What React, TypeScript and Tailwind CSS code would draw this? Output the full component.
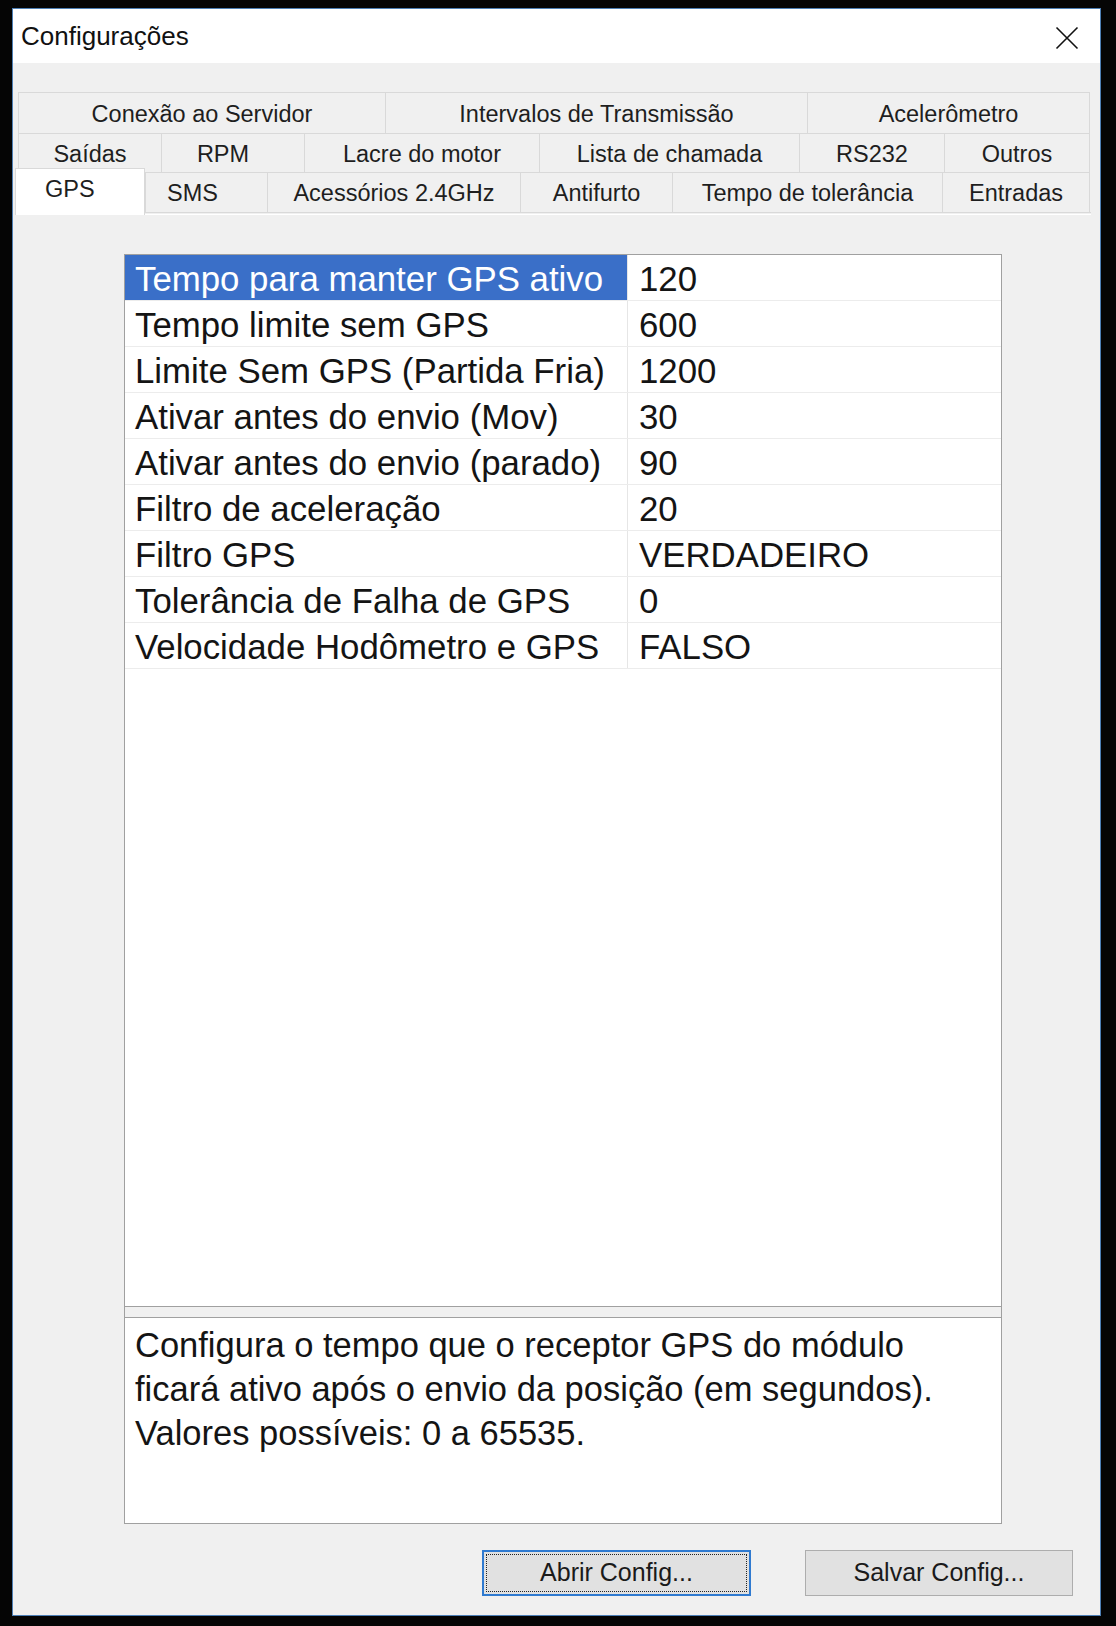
import React from "react";

const font = { fontFamily: '"Liberation Sans", Arial, sans-serif' };

type Tab = { label: string; w: number; extra?: string };

const row1: Tab[] = [
  { label: "Conexão ao Servidor", w: 367 },
  { label: "Intervalos de Transmissão", w: 422 },
  { label: "Acelerômetro", w: 283 },
];
const row2: Tab[] = [
  { label: "Saídas", w: 143 },
  { label: "RPM", w: 143, extra: "pr-[20px]" },
  { label: "Lacre do motor", w: 235 },
  { label: "Lista de chamada", w: 260 },
  { label: "RS232", w: 145 },
  { label: "Outros", w: 146 },
];
const row3: Tab[] = [
  { label: "SMS", w: 122, extra: "pr-[28px]" },
  { label: "Acessórios 2.4GHz", w: 253 },
  { label: "Antifurto", w: 152 },
  { label: "Tempo de tolerância", w: 270 },
  { label: "Entradas", w: 148 },
];

const props: [string, string][] = [
  ["Tempo para manter GPS ativo", "120"],
  ["Tempo limite sem GPS", "600"],
  ["Limite Sem GPS (Partida Fria)", "1200"],
  ["Ativar antes do envio (Mov)", "30"],
  ["Ativar antes do envio (parado)", "90"],
  ["Filtro de aceleração", "20"],
  ["Filtro GPS", "VERDADEIRO"],
  ["Tolerância de Falha de GPS", "0"],
  ["Velocidade Hodômetro e GPS", "FALSO"],
];

function TabRow({ tabs }: { tabs: Tab[] }) {
  return (
    <>
      {tabs.map((t, i) => (
        <div
          key={t.label}
          style={{ width: t.w }}
          className={`h-full flex items-center justify-center pt-[3px] border-t border-l border-[#d9d9d9] ${
            i === tabs.length - 1 ? "border-r" : ""
          } ${t.extra ?? ""} text-[23.5px] text-[#1e1e1e] whitespace-nowrap`}
        >
          {t.label}
        </div>
      ))}
    </>
  );
}

export default function App() {
  return (
    <div className="w-[1116px] h-[1626px] bg-[#050505] pt-[8px] pl-[12px]" style={font}>
      <div className="w-[1089px] h-[1608px] border border-[#4d7fb5] flex flex-col bg-[#f0f0f0]">
        {/* Title bar */}
        <div className="h-[54px] bg-white flex items-center justify-between pl-[8px] pr-[21px] shrink-0">
          <span className="text-[26px] text-[#111]">Configurações</span>
          <svg width="24" height="24" viewBox="0 0 24 24" className="mt-[4px]">
            <path d="M1.5 1.5 L22.5 22.5 M22.5 1.5 L1.5 22.5" stroke="#111" strokeWidth="1.6" fill="none" />
          </svg>
        </div>

        {/* Body */}
        <div className="flex-1 flex flex-col pt-[29px]">
          {/* Tabs */}
          <div className="flex flex-col ml-[5px] w-[1072px]">
            <div className="flex h-[41px]">
              <TabRow tabs={row1} />
            </div>
            <div className="flex h-[39px]">
              <TabRow tabs={row2} />
            </div>
            <div className="flex h-[40px] items-start">
              <div className="relative z-10 -ml-[3px] -mt-[4px] w-[130px] h-[47px] bg-white border-t border-l border-r border-[#d9d9d9] flex items-start pt-[3px] pl-[29px] text-[23.5px] text-[#1e1e1e]">
                GPS
              </div>
              <div className="flex h-full">
                <TabRow tabs={row3} />
              </div>
            </div>
          </div>
          <div className="ml-[2px] w-[1076px] border-t border-[#d9d9d9] border-b border-b-white h-[3px]" />

          {/* Property grid */}
          <div className="ml-[111px] mt-[39px] w-[878px] h-[1270px] border border-[#a0a0a0] flex flex-col">
            <div className="h-[1051px] bg-white flex flex-col">
              {props.map(([k, v], i) => (
                <div key={k} className="flex h-[46px] border-b border-[#ececec] text-[34.8px] leading-none">
                  <div
                    className={`w-[503px] flex items-center pl-[10px] pt-[4px] whitespace-nowrap border-r border-[#e6e6e6] ${
                      i === 0 ? "bg-[#3a6fc8] text-white" : "text-[#141414]"
                    }`}
                  >
                    {k}
                  </div>
                  <div className="flex-1 flex items-center pl-[11px] pt-[4px] text-[#141414]">{v}</div>
                </div>
              ))}
            </div>
            <div className="h-[12px] border-t border-b border-[#a0a0a0] bg-[#f0f0f0]" />
            <div className="flex-1 bg-white pt-[5px] pl-[10px] text-[34.5px] leading-[44px] text-[#141414]">
              <div>Configura o tempo que o receptor GPS do módulo</div>
              <div>ficará ativo após o envio da posição (em segundos).</div>
              <div>Valores possíveis: 0 a 65535.</div>
            </div>
          </div>

          {/* Buttons */}
          <div className="flex mt-[26px] ml-[469px] gap-[54px]">
            <div className="w-[269px] h-[46px] bg-[#e1e1e1] border-2 border-[#2f7ad0] p-[2px]">
              <div className="w-full h-full border border-dotted border-[#222] flex items-center justify-center text-[25px] text-[#1a1a1a]">
                Abrir Config...
              </div>
            </div>
            <div className="w-[268px] h-[46px] bg-[#e1e1e1] border border-[#adadad] flex items-center justify-center text-[25px] text-[#1a1a1a]">
              Salvar Config...
            </div>
          </div>
        </div>
      </div>
    </div>
  );
}
